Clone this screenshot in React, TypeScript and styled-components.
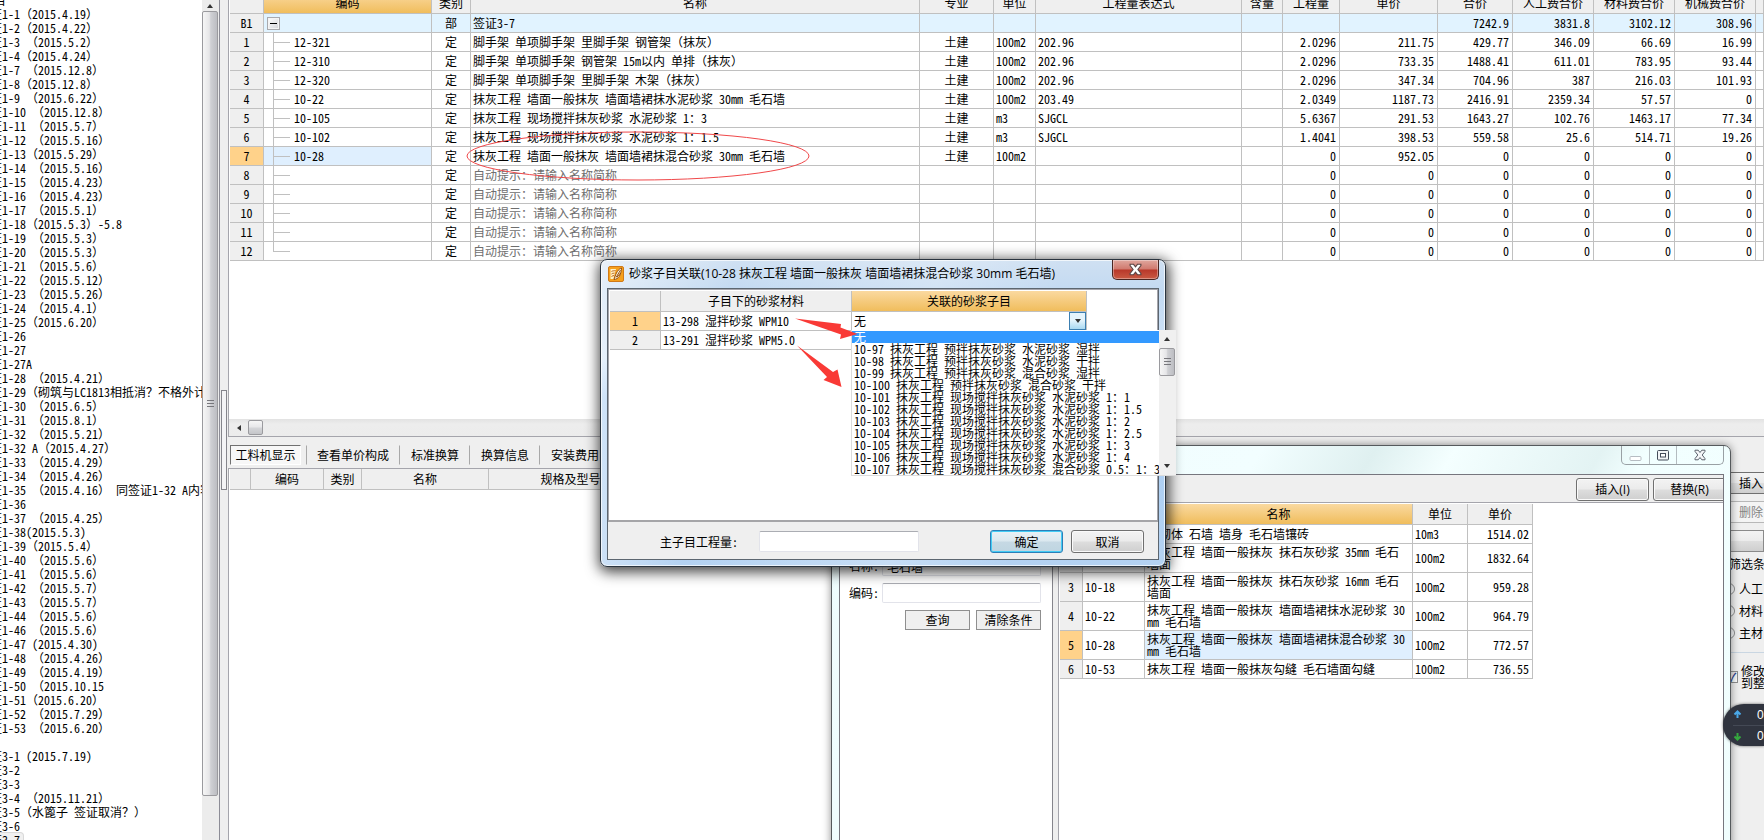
import React, { useState } from 'react';
import styled, { createGlobalStyle, css } from 'styled-components';

const line = '#c0c0c0';
const face = '#efefef';
const headGold = 'linear-gradient(#fad9a0, #f0bd5c)';
const buttonFace = 'linear-gradient(#f3f3f3 0%, #ebebeb 48%, #dddddd 52%, #cfcfcf 100%)';
const thumbX = 'linear-gradient(90deg, #f6f6f6 0%, #e6e6e8 45%, #cfd0d4 55%, #bcbdc2 100%)';
const thumbY = 'linear-gradient(#f6f6f6 0%, #e8e8ea 45%, #d4d5d8 55%, #c4c5c9 100%)';

const GlobalStyle = createGlobalStyle`
  *, *::before, *::after { box-sizing: border-box; }
  body { margin: 0; background: ${face}; }
  body, button, input {
    font-family: 'Noto Sans Mono CJK SC', 'Noto Sans CJK SC', monospace;
    font-size: 12px;
    line-height: 14px;
    color: #000;
    text-spacing-trim: space-all;
  }
  button, input { margin: 0; padding: 0; }
`;

const Screen = styled.div`
  position: relative;
  display: flex;
  width: 100%;
  height: 100vh;
  overflow: hidden;
  background: ${face};
`;

/* ---------- Left tree ---------- */

const Sidebar = styled.aside`
  display: flex;
  flex: 0 0 220px;
  min-width: 0;
  background: ${face};
  border-right: 1px solid #8c8c96;
`;

const TreeList = styled.ul`
  flex: 1;
  min-width: 0;
  margin: 0;
  padding: 0;
  overflow: hidden;
  list-style: none;
  background: #fff;
`;

const TreeItem = styled.li<{ $root?: boolean; $selected?: boolean }>`
  height: 14px;
  margin-left: ${(p) => (p.$root ? '-18px' : '-22px')};
  white-space: pre;
  &:first-child { margin-top: -7px; }
  span {
    display: inline-block;
    height: 14px;
    ${(p) =>
      p.$selected &&
      css`
        padding-right: 3px;
        border-radius: 3px;
        background: #f0f0f0;
        box-shadow: 0 0 0 1px #d9d9d9;
      `}
  }
`;

const VScroll = styled.div`
  display: flex;
  flex-direction: column;
  flex: 0 0 17px;
  padding-right: 1px;
  background: #ececec;
`;

const VThumb = styled.div<{ $height: string }>`
  display: flex;
  align-items: center;
  justify-content: center;
  height: ${(p) => p.$height};
  border: 1px solid #9a9a9e;
  border-radius: 2px;
  background: ${thumbX};
`;

const Grip = styled.span`
  width: 7px;
  height: 8px;
  background: repeating-linear-gradient(#77777c 0 1px, transparent 1px 3px);
`;

const ArrowBox = styled.span<{ $height: number }>`
  display: flex;
  align-items: center;
  justify-content: center;
  height: ${(p) => p.$height}px;
`;

const Triangle = styled.span<{ $dir: 'up' | 'down' | 'left' }>`
  width: 0;
  height: 0;
  border: 3px solid transparent;
  ${(p) => p.$dir === 'up' && 'border-bottom: 4px solid #333; border-top: 0;'}
  ${(p) => p.$dir === 'down' && 'border-top: 4px solid #333; border-bottom: 0;'}
  ${(p) => p.$dir === 'left' && 'border-right: 4px solid #333; border-left: 0;'}
`;

const Splitter = styled.div`
  display: flex;
  flex-direction: column;
  flex: 0 0 8px;
  padding: 390px 1px 0;
`;

const SplitterHandle = styled.button`
  width: 6px;
  height: 100px;
  border: 1px solid #85858c;
  background: #f4f4f6;
`;

/* ---------- Main area ---------- */

const Main = styled.main`
  display: flex;
  flex: 1;
  flex-direction: column;
  min-width: 0;
`;

const UpperPane = styled.section`
  display: flex;
  flex: 0 0 437px;
  flex-direction: column;
  border-left: 1px solid #a5a5ac;
  border-bottom: 1px solid #a5a5ac;
  overflow: hidden;
`;

const TableView = styled.div`
  flex: 1;
  padding-left: 1px;
  overflow: hidden;
  background: #fff;
`;

const DataTable = styled.table<{ $clip?: boolean; $fill?: boolean }>`
  width: ${(p) => (p.$fill ? '100%' : 'auto')};
  margin-top: ${(p) => (p.$clip ? '-7px' : '0')};
  table-layout: fixed;
  border-collapse: separate;
  border-spacing: 0;
`;

const Th = styled.th<{ $gold?: boolean }>`
  height: 21px;
  padding: 0;
  overflow: hidden;
  border-right: 1px solid ${line};
  border-bottom: 1px solid ${line};
  background: ${(p) => (p.$gold ? headGold : face)};
  font-weight: normal;
  line-height: 18px;
  text-align: center;
  white-space: nowrap;
`;

type Align = 'left' | 'center' | 'right';

const Td = styled.td<{ $align?: Align; $bg?: string; $muted?: boolean; $height?: number }>`
  height: ${(p) => p.$height ?? 19}px;
  padding: ${(p) => (p.$align === 'center' ? '0' : p.$align === 'right' ? '0 3px 0 0' : '0 0 0 2px')};
  overflow: hidden;
  border-right: 1px solid ${line};
  border-bottom: 1px solid ${line};
  background: ${(p) => p.$bg ?? '#fff'};
  color: ${(p) => (p.$muted ? '#6e6e6e' : '#000')};
  line-height: ${(p) => ((p.$height ?? 19) > 19 ? 12 : 18)}px;
  text-align: ${(p) => p.$align ?? 'left'};
  white-space: pre;
`;

const TreeCell = styled.div`
  display: flex;
  align-items: center;
  height: 18px;
  padding-left: 7px;
`;

const Branch = styled.span<{ $last?: boolean }>`
  width: 17px;
  height: 18px;
  margin-right: 4px;
  background:
    linear-gradient(${line}, ${line}) 0 0 / 1px ${(p) => (p.$last ? '50%' : '100%')} no-repeat,
    linear-gradient(${line}, ${line}) 0 9px / 100% 1px no-repeat;
`;

const Collapse = styled.button`
  display: flex;
  align-items: center;
  justify-content: center;
  width: 13px;
  height: 13px;
  margin-left: -6px;
  border: 1px solid #a9a9ad;
  background: linear-gradient(135deg, #fff, #d4d4d8);
  box-shadow: inset 0 0 0 1px #f4f4f4;
  &::before { content: ''; width: 7px; height: 1px; background: #000; }
`;

const HScroll = styled.div`
  display: flex;
  align-items: center;
  height: 17px;
  padding-left: 1px;
  background: linear-gradient(#e2e2e2, #ededed 30%, #ececec);
`;

const HArrow = styled.span`
  display: flex;
  justify-content: center;
  width: 18px;
`;

const HThumb = styled.div`
  width: 15px;
  height: 15px;
  border: 1px solid #9a9a9e;
  border-radius: 2px;
  background: ${thumbY};
`;

const LowerPane = styled.section`
  display: flex;
  flex: 1;
  min-height: 0;
`;

const DetailColumn = styled.div`
  display: flex;
  flex: 1;
  flex-direction: column;
  min-width: 0;
`;

const Tabs = styled.div`
  display: flex;
  align-items: center;
  height: 31px;
  padding: 5px 0 0 2px;
  overflow: hidden;
`;

const Tab = styled.button<{ $active?: boolean }>`
  flex: none;
  height: 20px;
  padding: ${(p) => (p.$active ? '0 4px' : '0 10px')};
  border: 1px solid transparent;
  border-right: 1px solid #a8a8a8;
  background: transparent;
  white-space: nowrap;
  ${(p) =>
    p.$active &&
    css`
      width: 71px;
      margin-right: 5px;
      border: 1px solid #fff;
      border-top-color: #707070;
      border-left-color: #707070;
      background: #f7f7f7;
      & + button { border-left: 1px solid #a8a8a8; }
    `}
`;

const DetailView = styled.div`
  flex: 1;
  padding-left: 1px;
  overflow: hidden;
  border-top: 1px solid #a5a5ac;
  border-left: 1px solid #a5a5ac;
  background: #fff;
`;

const FilterColumn = styled.aside`
  display: flex;
  flex: 0 0 64px;
  flex-direction: column;
  min-width: 0;
  padding-top: 35px;
  overflow: hidden;
  white-space: nowrap;
`;

const SideButton = styled.button`
  width: 100px;
  height: 22px;
  margin-bottom: 7px;
  padding-left: 38px;
  border: 1px solid #707070;
  border-radius: 3px;
  background: ${buttonFace};
  text-align: left;
  &:disabled { border-color: #b8b8b8; background: #f4f4f4; color: #838383; }
`;

const FilterBar = styled.div`
  height: 22px;
  border: 1px solid #8a8a8a;
  background: ${buttonFace};
`;

const FilterTitle = styled.div`
  height: 24px;
  padding-left: 29px;
  line-height: 24px;
`;

const Choice = styled.label<{ $tall?: boolean }>`
  display: flex;
  align-items: center;
  gap: ${(p) => (p.$tall ? 3 : 4)}px;
  height: ${(p) => (p.$tall ? 48 : 22)}px;
  padding-left: ${(p) => (p.$tall ? 26 : 23)}px;
  line-height: 12px;
  input {
    display: flex;
    flex: none;
    align-items: center;
    justify-content: center;
    width: 12px;
    height: 12px;
    appearance: none;
    border: 1px solid #8e8f8f;
    background: linear-gradient(135deg, #d8dbdf, #fff);
    color: #31478f;
  }
  input[type='radio'] { border-radius: 50%; }
  input:checked::before { content: '✓'; font-weight: bold; line-height: 10px; }
`;

const RadioGroup = styled.div`
  padding: 2px 0 8px;
  border-bottom: 1px solid #c9d6e2;
`;

/* ---------- Windows ---------- */

const QueryWindow = styled.section`
  position: absolute;
  top: 445px;
  right: 33px;
  bottom: -20px;
  left: 831px;
  display: flex;
  flex-direction: column;
  padding: 0 6px 0 7px;
  border: 1px solid #55595c;
  border-radius: 7px;
  background: linear-gradient(120deg, #eefcfd 0%, #f2feff 38%, #dff0f0 48%, #f4ffff 55%, #e3f3f3 68%, #f2ffff 72%, #f0fdfd 100%);
  box-shadow: 0 0 9px rgba(0, 0, 0, 0.45);
`;

const WindowControls = styled.div`
  display: flex;
  align-self: flex-end;
  height: 19px;
  margin-bottom: 9px;
  border: 1px solid #99a0a4;
  border-top: 0;
  border-radius: 0 0 5px 5px;
`;

const ControlButton = styled.button<{ $width: number }>`
  display: flex;
  align-items: center;
  justify-content: center;
  width: ${(p) => p.$width}px;
  border: 0;
  border-right: 1px solid #b4bcc0;
  background: transparent;
  &:last-child { border-right: 0; }
`;

const QueryClient = styled.div`
  display: flex;
  flex: 1;
  flex-direction: column;
  min-height: 0;
  border: 1px solid #76767e;
  background: ${face};
`;

const QueryToolbar = styled.div`
  display: flex;
  justify-content: flex-end;
  gap: 4px;
  height: 27px;
  padding-top: 3px;
  overflow: hidden;
`;

const QueryButton = styled.button`
  flex: none;
  width: 73px;
  height: 23px;
  border: 1px solid #707070;
  border-radius: 3px;
  background: ${buttonFace};
  box-shadow: inset 0 0 0 1px #fafafa;
  &:last-child { margin-right: -3px; }
  span { font-family: 'Open Sans', 'Noto Sans', sans-serif; }
`;

const QueryBody = styled.div`
  display: flex;
  flex: 1;
  gap: 5px;
  min-height: 0;
`;

const SearchForm = styled.form`
  display: flex;
  flex: 0 0 213px;
  flex-direction: column;
  gap: 7px;
  padding: 54px 11px 0 9px;
  border-right: 1px solid #85858c;
  background: #fff;
`;

const FieldRow = styled.div`
  display: flex;
  align-items: center;
  label { flex: 0 0 33px; white-space: nowrap; }
  input { flex: 1; min-width: 0; }
`;

const TextInput = styled.input`
  height: 20px;
  padding: 0 4px;
  border: 1px solid #e2e3ea;
  border-top-color: #abadb3;
  border-radius: 2px;
  background: #fff;
`;

const FormActions = styled.div`
  display: flex;
  justify-content: flex-end;
  gap: 6px;
`;

const FlatButton = styled.button`
  width: 65px;
  height: 20px;
  border: 1px solid #8f8f8f;
  background: ${face};
`;

const ResultView = styled.div`
  flex: 1;
  min-width: 0;
  padding: 1px 0 0 1px;
  border-top: 1px solid #a5a5ac;
  border-left: 1px solid #a5a5ac;
  background: #fff;
`;

const Dialog = styled.section`
  position: absolute;
  top: 259px;
  left: 600px;
  display: flex;
  flex-direction: column;
  width: 566px;
  height: 308px;
  padding: 0 6px 6px;
  border: 1px solid #2b3540;
  border-radius: 7px;
  background:
    linear-gradient(100deg, rgba(255, 255, 255, 0.55) 0%, rgba(255, 255, 255, 0) 22%, rgba(255, 255, 255, 0.25) 55%, rgba(255, 255, 255, 0) 75%),
    linear-gradient(#cfe0f2 0%, #c3daf2 10%, #cfe3f8 32%, #a9cdf3 45%, #b4d2f2 100%);
  box-shadow: 0 0 0 1px rgba(255, 255, 255, 0.7) inset, 1px 3px 14px 2px rgba(0, 0, 0, 0.75);
`;

const DialogTitle = styled.header`
  display: flex;
  align-items: flex-start;
  height: 28px;
  padding-left: 1px;
`;

const IconSlot = styled.span`
  display: flex;
  flex: none;
  padding-top: 6px;
`;

const TitleText = styled.h1`
  flex: 1;
  margin: 5px 0 0 5px;
  font: normal 12px/18px 'Open Sans', 'Noto Sans CJK SC', sans-serif;
  white-space: nowrap;
`;

const CloseButton = styled.button`
  display: flex;
  align-items: center;
  justify-content: center;
  width: 47px;
  height: 20px;
  border: 1px solid #4a2622;
  border-top: 0;
  border-radius: 0 0 5px 5px;
  background: linear-gradient(#e0a79e 0%, #d0796e 48%, #b8382a 52%, #c95a43 100%);
  box-shadow: inset 0 0 0 1px rgba(255, 255, 255, 0.35);
`;

const DialogClient = styled.div`
  display: flex;
  flex: 1;
  flex-direction: column;
  border: 1px solid #5c6670;
  background: ${face};
`;

const DialogGrid = styled.div`
  flex: 1;
  padding: 1px 0 0 1px;
  border: 1px solid #a5a5ac;
  border-bottom: 2px solid #a5a5a8;
  background: #fff;
`;

const Combo = styled.div`
  display: flex;
  height: 18px;
  input {
    flex: 1;
    min-width: 0;
    border: 0;
    outline: 0;
    background: #fff;
  }
  button {
    display: flex;
    align-items: center;
    justify-content: center;
    width: 17px;
    height: 18px;
    border: 1px solid #3c7fb1;
    background: linear-gradient(#e4f4fc 45%, #a9d9f2);
  }
`;

const DropDown = styled.div`
  position: absolute;
  top: 70px;
  left: 250px;
  display: flex;
  width: 325px;
  height: 146px;
  border-bottom: 1px solid #dcdcdc;
  border-left: 1px solid #dcdcdc;
  background: #fff;
`;

const Options = styled.ul`
  flex: 1;
  min-width: 0;
  margin: 0;
  padding: 1px 0 0;
  overflow: hidden;
  list-style: none;
`;

const Option = styled.li<{ $selected?: boolean }>`
  height: 12px;
  padding-left: 2px;
  background: ${(p) => (p.$selected ? '#3399ff' : 'transparent')};
  color: ${(p) => (p.$selected ? '#fff' : '#000')};
  line-height: 12px;
  white-space: pre;
`;

const ListScroll = styled(VScroll)`
  background: #f0f0f0;
  justify-content: space-between;
`;

const DialogFooter = styled.footer`
  display: flex;
  align-items: center;
  height: 37px;
  padding: 2px 14px 0 52px;
  label { flex: 0 0 99px; white-space: nowrap; }
`;

const QuantityInput = styled(TextInput)`
  width: 160px;
  height: 21px;
  margin-right: auto;
`;

const DialogButton = styled.button<{ $primary?: boolean }>`
  width: 73px;
  height: 23px;
  margin-left: 8px;
  border: 1px solid ${(p) => (p.$primary ? '#2c7fb8' : '#707070')};
  border-radius: 3px;
  background: ${(p) => (p.$primary ? 'linear-gradient(#e8f1f6 0%, #dbe8ef 48%, #c6d9e4 52%, #bfd5e1 100%)' : buttonFace)};
  box-shadow: inset 0 0 0 1px ${(p) => (p.$primary ? '#43ccf5' : '#fafafa')};
`;

const Annotations = styled.svg`
  position: absolute;
  top: 0;
  left: 0;
  pointer-events: none;
`;

const SpeedWidget = styled.div`
  position: absolute;
  top: 704px;
  right: 0;
  width: 41px;
  height: 42px;
  padding-left: 10px;
  border-radius: 21px 0 0 21px;
  background: #30343f;
  box-shadow: 0 0 3px rgba(0, 0, 0, 0.6);
`;

const SpeedRow = styled.div`
  display: flex;
  align-items: center;
  gap: 15px;
  height: 21px;
  color: #fff;
  & + & { border-top: 1px solid #444955; }
  span { font-family: 'Liberation Sans', sans-serif; }
`;

/* ---------- Data ---------- */

const treeItems = [
  '签证1-1（2015.4.19）', '签证1-2（2015.4.22）', '签证1-3 （2015.5.2）', '签证1-4（2015.4.24）',
  '签证1-7 （2015.12.8）', '签证1-8（2015.12.8）', '签证1-9 （2015.6.22）', '签证1-10 （2015.12.8）',
  '签证1-11 （2015.5.7）', '签证1-12 （2015.5.16）', '签证1-13（2015.5.29）', '签证1-14 （2015.5.16）',
  '签证1-15 （2015.4.23）', '签证1-16 （2015.4.23）', '签证1-17 （2015.5.1）', '签证1-18（2015.5.3）-5.8',
  '签证1-19 （2015.5.3）', '签证1-20 （2015.5.3）', '签证1-21 （2015.5.6）', '签证1-22 （2015.5.12）',
  '签证1-23 （2015.5.26）', '签证1-24 （2015.4.1）', '签证1-25（2015.6.20）', '签证1-26', '签证1-27',
  '签证1-27A', '签证1-28 （2015.4.21）', '签证1-29（砌筑与LC1813相抵消？不格外计', '签证1-30 （2015.6.5）',
  '签证1-31 （2015.8.1）', '签证1-32 （2015.5.21）', '签证1-32 A（2015.4.27）', '签证1-33 （2015.4.29）',
  '签证1-34 （2015.4.26）', '签证1-35 （2015.4.16） 同签证1-32 A内容', '签证1-36', '签证1-37 （2015.4.25）',
  '签证1-38(2015.5.3)', '签证1-39（2015.5.4）', '签证1-40 （2015.5.6）', '签证1-41 （2015.5.6）',
  '签证1-42 （2015.5.7）', '签证1-43 （2015.5.7）', '签证1-44 （2015.5.6）', '签证1-46 （2015.5.6）',
  '签证1-47 (2015.4.30)', '签证1-48 （2015.4.26）', '签证1-49 （2015.4.19）', '签证1-50 （2015.10.15',
  '签证1-51（2015.6.20）', '签证1-52 （2015.7.29）', '签证1-53 （2015.6.20）', '', '签证3-1 (2015.7.19)',
  '签证3-2', '签证3-3', '签证3-4 （2015.11.21）', '签证3-5（水篦子 签证取消？）', '签证3-6', '签证3-7',
];

const columns: { title: string; width?: number; align: Align }[] = [
  { title: '编码', width: 168, align: 'left' },
  { title: '类别', width: 39, align: 'center' },
  { title: '名称', align: 'left' },
  { title: '专业', width: 74, align: 'center' },
  { title: '单位', width: 42, align: 'left' },
  { title: '工程量表达式', width: 206, align: 'left' },
  { title: '含量', width: 41, align: 'left' },
  { title: '工程量', width: 57, align: 'right' },
  { title: '单价', width: 98, align: 'right' },
  { title: '合价', width: 75, align: 'right' },
  { title: '人工费合价', width: 81, align: 'right' },
  { title: '材料费合价', width: 81, align: 'right' },
  { title: '机械费合价', width: 81, align: 'right' },
];

const hint = '自动提示：请输入名称简称';
const blank = ['', '定', hint, '', '', '', '', '0', '0', '0', '0', '0', '0'];

const rows: string[][] = [
  ['', '部', '签证3-7', '', '', '', '', '', '', '7242.9', '3831.8', '3102.12', '308.96'],
  ['12-321', '定', '脚手架 单项脚手架 里脚手架 钢管架（抹灰）', '土建', '100m2', '202.96', '', '2.0296', '211.75', '429.77', '346.09', '66.69', '16.99'],
  ['12-310', '定', '脚手架 单项脚手架 钢管架 15m以内 单排（抹灰）', '土建', '100m2', '202.96', '', '2.0296', '733.35', '1488.41', '611.01', '783.95', '93.44'],
  ['12-320', '定', '脚手架 单项脚手架 里脚手架 木架（抹灰）', '土建', '100m2', '202.96', '', '2.0296', '347.34', '704.96', '387', '216.03', '101.93'],
  ['10-22', '定', '抹灰工程 墙面一般抹灰 墙面墙裙抹水泥砂浆 30mm 毛石墙', '土建', '100m2', '203.49', '', '2.0349', '1187.73', '2416.91', '2359.34', '57.57', '0'],
  ['10-105', '定', '抹灰工程 现场搅拌抹灰砂浆 水泥砂浆 1：3', '土建', 'm3', 'SJGCL', '', '5.6367', '291.53', '1643.27', '102.76', '1463.17', '77.34'],
  ['10-102', '定', '抹灰工程 现场搅拌抹灰砂浆 水泥砂浆 1：1.5', '土建', 'm3', 'SJGCL', '', '1.4041', '398.53', '559.58', '25.6', '514.71', '19.26'],
  ['10-28', '定', '抹灰工程 墙面一般抹灰 墙面墙裙抹混合砂浆 30mm 毛石墙', '土建', '100m2', '', '', '0', '952.05', '0', '0', '0', '0'],
  blank, blank, blank, blank, blank,
];

const tabs = ['工料机显示', '查看单价构成', '标准换算', '换算信息', '安装费用'];

const results = [
  { code: '3-65', name: '石砌体 石墙 墙身 毛石墙镶砖', unit: '10m3', price: '1514.02' },
  { code: '10-17', name: '抹灰工程 墙面一般抹灰 抹石灰砂浆 35mm 毛石\n墙面', unit: '100m2', price: '1832.64' },
  { code: '10-18', name: '抹灰工程 墙面一般抹灰 抹石灰砂浆 16mm 毛石\n墙面', unit: '100m2', price: '959.28' },
  { code: '10-22', name: '抹灰工程 墙面一般抹灰 墙面墙裙抹水泥砂浆 30\nmm 毛石墙', unit: '100m2', price: '964.79' },
  { code: '10-28', name: '抹灰工程 墙面一般抹灰 墙面墙裙抹混合砂浆 30\nmm 毛石墙', unit: '100m2', price: '772.57' },
  { code: '10-53', name: '抹灰工程 墙面一般抹灰勾缝 毛石墙面勾缝', unit: '100m2', price: '736.55' },
];

const options = [
  '无',
  '10-97 抹灰工程 预拌抹灰砂浆 水泥砂浆 湿拌',
  '10-98 抹灰工程 预拌抹灰砂浆 水泥砂浆 干拌',
  '10-99 抹灰工程 预拌抹灰砂浆 混合砂浆 湿拌',
  '10-100 抹灰工程 预拌抹灰砂浆 混合砂浆 干拌',
  '10-101 抹灰工程 现场搅拌抹灰砂浆 水泥砂浆 1：1',
  '10-102 抹灰工程 现场搅拌抹灰砂浆 水泥砂浆 1：1.5',
  '10-103 抹灰工程 现场搅拌抹灰砂浆 水泥砂浆 1：2',
  '10-104 抹灰工程 现场搅拌抹灰砂浆 水泥砂浆 1：2.5',
  '10-105 抹灰工程 现场搅拌抹灰砂浆 水泥砂浆 1：3',
  '10-106 抹灰工程 现场搅拌抹灰砂浆 水泥砂浆 1：4',
  '10-107 抹灰工程 现场搅拌抹灰砂浆 混合砂浆 0.5：1：3',
];

/* ---------- Parts ---------- */

function cellBackground(row: number, col: number) {
  if (row === 0) return '#e1f3ff';
  if (row === 7 && col === 0) return '#dfeffe';
  return '#fff';
}

function ItemTable() {
  return (
    <DataTable $fill $clip>
      <colgroup>
        <col width={34} />
        {columns.map((c) => (
          <col key={c.title} width={c.width} />
        ))}
        <col width={8} />
      </colgroup>
      <thead>
        <tr>
          <Th />
          {columns.map((c, i) => (
            <Th key={c.title} $gold={i === 0}>{c.title}</Th>
          ))}
          <Th />
        </tr>
      </thead>
      <tbody>
        {rows.map((row, r) => (
          <tr key={r}>
            <Td $align="center" $bg={r === 7 ? '#ffd28a' : face}>{r === 0 ? 'B1' : r}</Td>
            {row.map((text, c) => (
              <Td key={c} $align={columns[c].align} $bg={cellBackground(r, c)} $muted={text === hint}>
                {c === 0 ? (
                  <TreeCell>
                    {r === 0 ? <Collapse aria-label="折叠" /> : <Branch $last={r === rows.length - 1} />}
                    {text}
                  </TreeCell>
                ) : (
                  text
                )}
              </Td>
            ))}
            <Td $bg={cellBackground(r, 14)} />
          </tr>
        ))}
      </tbody>
    </DataTable>
  );
}

function CrossIcon({ size, stroke, fill }: { size: number; stroke: string; fill: string }) {
  return (
    <svg width={size} height={size} viewBox="0 0 12 11">
      <path
        d="M1 .7h3.2L6 3 7.8.7H11v1.2L8.2 5.5 11 9.1v1.2H7.8L6 8 4.2 10.3H1V9.1l2.8-3.6L1 1.9z"
        fill={fill}
        stroke={stroke}
      />
    </svg>
  );
}

function AppIcon() {
  return (
    <svg width="16" height="16" viewBox="0 0 16 16">
      <rect x=".5" y=".5" width="15" height="15" rx="1.5" fill="#f6a01c" stroke="#d07a18" />
      <path d="M2.5 3h5.500l-1 3.500L5.500 13H2.500z" fill="#fff1c4" />
      <path d="M3.500 5.500c1.500-1 2.500-.5 4-1M3.500 8c1-1 2-.5 3-1M3.500 10.500c1-.8 1.500-.5 2.500-1" fill="none" stroke="#b9621a" />
      <path d="M13.500 2C10.500 3 8 6.500 6 13.500c4.500-.5 7-4 7.500-11.500z" fill="#fffbe8" stroke="#96500f" />
      <path d="M12.500 4 8 11.500M12.500 7 9 11" fill="none" stroke="#96500f" />
    </svg>
  );
}

function QueryPanel() {
  return (
    <QueryWindow aria-label="查询">
      <WindowControls>
        <ControlButton $width={28} aria-label="最小化">
          <svg width="13" height="12" viewBox="0 0 13 12">
            <rect x="1" y="7.500" width="11" height="4" rx="1" fill="#fff" stroke="#b6bcc2" />
          </svg>
        </ControlButton>
        <ControlButton $width={27} aria-label="最大化">
          <svg width="12" height="11" viewBox="0 0 12 11">
            <rect x=".5" y=".5" width="11" height="9.500" rx="1" fill="#f2f4f6" stroke="#454c5a" />
            <rect x="3.500" y="3.500" width="5" height="3.500" fill="#fff" stroke="#454c5a" />
          </svg>
        </ControlButton>
        <ControlButton $width={46} aria-label="关闭">
          <CrossIcon size={12} stroke="#5b616c" fill="#f4f6f8" />
        </ControlButton>
      </WindowControls>
      <QueryClient>
        <QueryToolbar>
          <QueryButton>插入<span>(I)</span></QueryButton>
          <QueryButton>替换<span>(R)</span></QueryButton>
        </QueryToolbar>
        <QueryBody>
          <SearchForm onSubmit={(e) => e.preventDefault()}>
            <FieldRow>
              <label htmlFor="q-name">名称:</label>
              <TextInput id="q-name" defaultValue="毛石墙" />
            </FieldRow>
            <FieldRow>
              <label htmlFor="q-code">编码:</label>
              <TextInput id="q-code" />
            </FieldRow>
            <FormActions>
              <FlatButton type="submit">查询</FlatButton>
              <FlatButton type="reset">清除条件</FlatButton>
            </FormActions>
          </SearchForm>
          <ResultView>
            <DataTable>
              <colgroup>
                <col width={23} />
                <col width={62} />
                <col width={268} />
                <col width={55} />
                <col width={65} />
              </colgroup>
              <thead>
                <tr>
                  <Th />
                  <Th>编码</Th>
                  <Th $gold>名称</Th>
                  <Th>单位</Th>
                  <Th>单价</Th>
                </tr>
              </thead>
              <tbody>
                {results.map((item, i) => {
                  const height = item.name.includes('\n') ? 29 : 19;
                  return (
                    <tr key={item.code}>
                      <Td $height={height} $align="center" $bg={i === 4 ? '#ffd28a' : face}>{i + 1}</Td>
                      <Td $height={height}>{item.code}</Td>
                      <Td $height={height} $bg={i === 4 ? '#dfeffe' : '#fff'}>{item.name}</Td>
                      <Td $height={height}>{item.unit}</Td>
                      <Td $height={height} $align="right">{item.price}</Td>
                    </tr>
                  );
                })}
              </tbody>
            </DataTable>
          </ResultView>
        </QueryBody>
      </QueryClient>
    </QueryWindow>
  );
}

function MortarDialog() {
  const [value, setValue] = useState('无');
  return (
    <Dialog role="dialog" aria-labelledby="dialog-title">
      <DialogTitle>
        <IconSlot><AppIcon /></IconSlot>
        <TitleText id="dialog-title">砂浆子目关联(10-28 抹灰工程 墙面一般抹灰 墙面墙裙抹混合砂浆 30mm 毛石墙)</TitleText>
        <CloseButton aria-label="关闭">
          <CrossIcon size={13} stroke="#5a4544" fill="#fff" />
        </CloseButton>
      </DialogTitle>
      <DialogClient>
        <DialogGrid>
          <DataTable>
            <colgroup>
              <col width={51} />
              <col width={191} />
              <col width={235} />
            </colgroup>
            <thead>
              <tr>
                <Th />
                <Th>子目下的砂浆材料</Th>
                <Th $gold>关联的砂浆子目</Th>
              </tr>
            </thead>
            <tbody>
              <tr>
                <Td $align="center" $bg="#ffd28a">1</Td>
                <Td>13-298 湿拌砂浆 WPM10</Td>
                <Td>
                  <Combo>
                    <input aria-label="关联的砂浆子目" value={value} onChange={(e) => setValue(e.target.value)} />
                    <button aria-label="展开"><Triangle $dir="down" /></button>
                  </Combo>
                </Td>
              </tr>
              <tr>
                <Td $align="center" $bg={face}>2</Td>
                <Td>13-291 湿拌砂浆 WPM5.0</Td>
                <Td />
              </tr>
            </tbody>
          </DataTable>
        </DialogGrid>
        <DialogFooter>
          <label htmlFor="quantity">主子目工程量:</label>
          <QuantityInput id="quantity" />
          <DialogButton $primary>确定</DialogButton>
          <DialogButton>取消</DialogButton>
        </DialogFooter>
      </DialogClient>
      <DropDown>
        <Options role="listbox">
          {options.map((text) => (
            <Option key={text} role="option" aria-selected={text === value} $selected={text === value} onClick={() => setValue(text)}>
              {text}
            </Option>
          ))}
        </Options>
        <ListScroll>
          <div>
            <ArrowBox $height={18}><Triangle $dir="up" /></ArrowBox>
            <VThumb $height="28px"><Grip /></VThumb>
          </div>
          <ArrowBox $height={18}><Triangle $dir="down" /></ArrowBox>
        </ListScroll>
      </DropDown>
    </Dialog>
  );
}

export default function App() {
  return (
    <>
      <GlobalStyle />
      <Screen>
        <Sidebar>
          <TreeList>
            <TreeItem $root>签目</TreeItem>
            {treeItems.map((text, i) => (
              <TreeItem key={i} $selected={i === treeItems.length - 1}><span>{text}</span></TreeItem>
            ))}
          </TreeList>
          <VScroll>
            <ArrowBox $height={11}><Triangle $dir="up" /></ArrowBox>
            <VThumb $height="calc(100% - 55px)"><Grip /></VThumb>
          </VScroll>
        </Sidebar>
        <Splitter><SplitterHandle aria-label="收起侧栏" /></Splitter>
        <Main>
          <UpperPane>
            <TableView><ItemTable /></TableView>
            <HScroll>
              <HArrow><Triangle $dir="left" /></HArrow>
              <HThumb />
            </HScroll>
          </UpperPane>
          <LowerPane>
            <DetailColumn>
              <Tabs>
                {tabs.map((text, i) => (
                  <Tab key={text} $active={i === 0}>{text}</Tab>
                ))}
              </Tabs>
              <DetailView>
                <DataTable>
                  <colgroup>
                    <col width={21} />
                    <col width={73} />
                    <col width={38} />
                    <col width={127} />
                    <col width={164} />
                  </colgroup>
                  <thead>
                    <tr>
                      <Th />
                      <Th>编码</Th>
                      <Th>类别</Th>
                      <Th>名称</Th>
                      <Th>规格及型号</Th>
                    </tr>
                  </thead>
                </DataTable>
              </DetailView>
            </DetailColumn>
            <FilterColumn>
              <SideButton>插入</SideButton>
              <SideButton disabled>删除</SideButton>
              <FilterBar />
              <FilterTitle>筛选条件</FilterTitle>
              <RadioGroup>
                <Choice><input type="radio" name="kind" />人工</Choice>
                <Choice><input type="radio" name="kind" />材料</Choice>
                <Choice><input type="radio" name="kind" />主材</Choice>
              </RadioGroup>
              <Choice $tall><input type="checkbox" defaultChecked /><span>修改<br />到整</span></Choice>
            </FilterColumn>
          </LowerPane>
        </Main>
        <QueryPanel />
        <MortarDialog />
        <SpeedWidget>
          <SpeedRow>
            <svg width="9" height="9" viewBox="0 0 9 9" fill="none" stroke="#4aa8e8" strokeWidth="2"><path d="M4.500 8V2M1.500 4.500l3-3 3 3" /></svg>
            <span>0</span>
          </SpeedRow>
          <SpeedRow>
            <svg width="9" height="9" viewBox="0 0 9 9" fill="none" stroke="#35a83e" strokeWidth="2"><path d="M4.500 1v6M1.500 4.500l3 3 3-3" /></svg>
            <span>0</span>
          </SpeedRow>
        </SpeedWidget>
        <Annotations width="900" height="420" viewBox="0 0 900 420">
          <ellipse cx="638" cy="156" rx="171" ry="24" fill="none" stroke="#f0484a" />
          <path d="M795 318.500 841 324l-.5 3.500L857.500 334l-17.500 5 1-4.500z" fill="#f93a36" />
          <path d="M797 345.500 833 372l4.500-2.500L841.500 387 823.500 380l3.500-3z" fill="#f93a36" />
        </Annotations>
      </Screen>
    </>
  );
}
